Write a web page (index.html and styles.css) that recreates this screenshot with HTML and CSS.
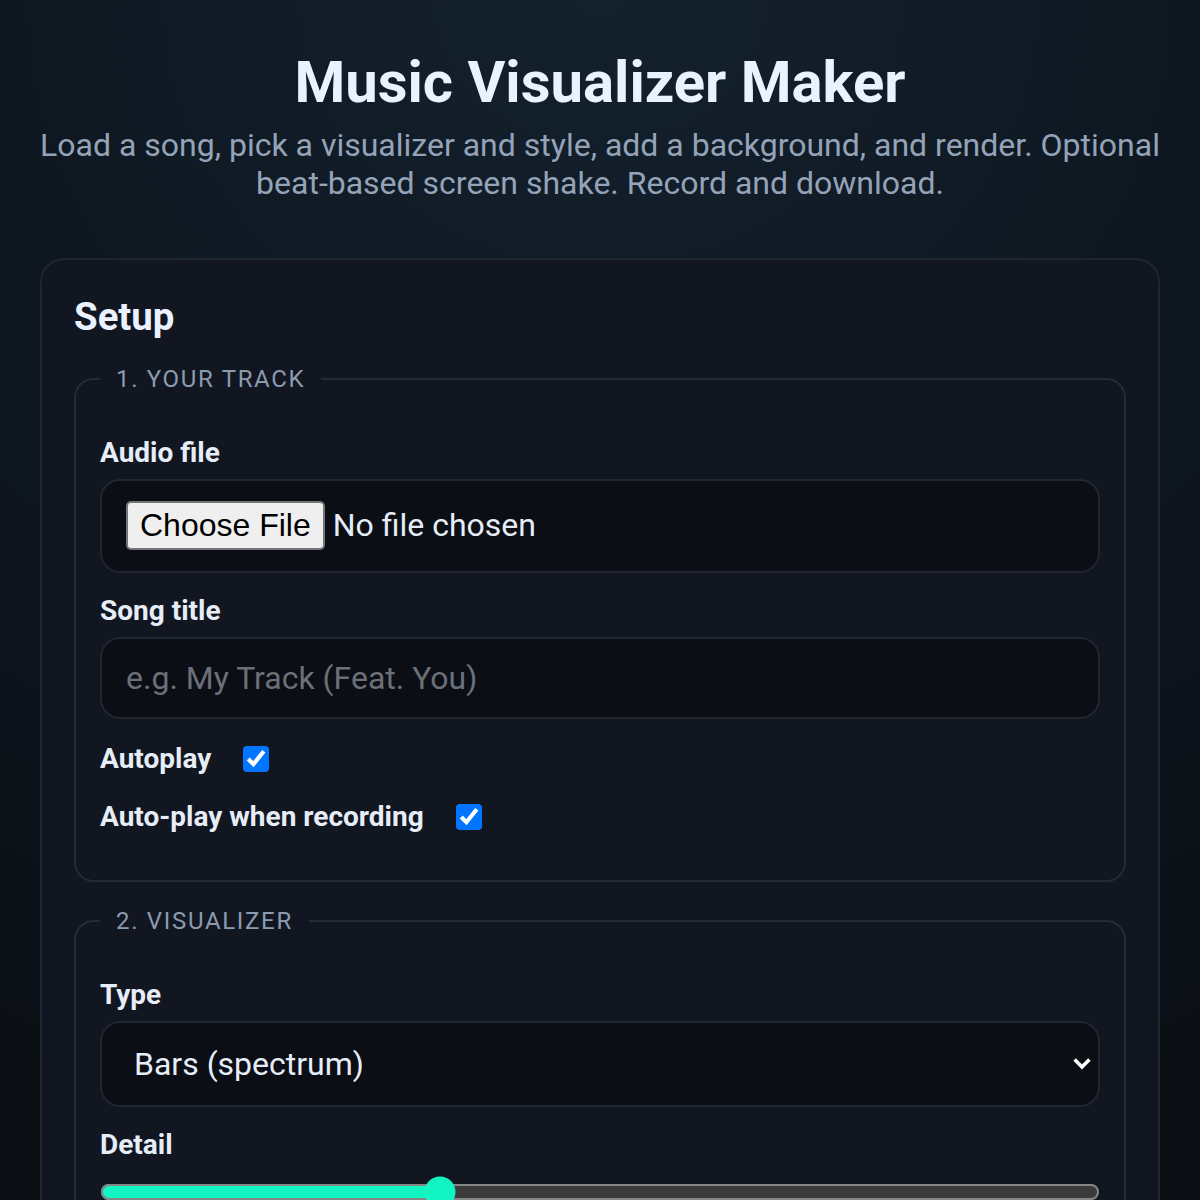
FILE: index.html
```html
<!DOCTYPE html>
<html lang="en">
<head>
<meta charset="utf-8">
<title>Music Visualizer Maker</title>
<link rel="stylesheet" href="styles.css">
</head>
<body>
<header class="hero">
  <h1 class="hero-title">Music Visualizer Maker</h1>
  <p class="hero-sub">Load a song, pick a visualizer and style, add a background, and render. Optional beat-based screen shake. Record and download.</p>
</header>
<main class="card">
  <h2 class="card-title">Setup</h2>
  <fieldset class="group">
    <legend class="group-legend">1. Your Track</legend>
    <div class="field">
      <label class="field-label" for="audio">Audio file</label>
      <input class="control file-control" id="audio" type="file" accept="audio/*">
    </div>
    <div class="field">
      <label class="field-label" for="title">Song title</label>
      <input class="control" id="title" type="text" placeholder="e.g. My Track (Feat. You)">
    </div>
    <div class="check-row">
      <label class="field-label" for="autoplay">Autoplay</label>
      <input class="check" id="autoplay" type="checkbox" checked>
    </div>
    <div class="check-row">
      <label class="field-label" for="recplay">Auto-play when recording</label>
      <input class="check" id="recplay" type="checkbox" checked>
    </div>
  </fieldset>
  <fieldset class="group">
    <legend class="group-legend">2. Visualizer</legend>
    <div class="field">
      <label class="field-label" for="type">Type</label>
      <div class="select-wrap">
        <select class="control select-control" id="type">
          <option>Bars (spectrum)</option>
          <option>Waveform</option>
          <option>Circle</option>
        </select>
        <svg class="select-arrow" viewBox="0 0 10 7" width="10" height="7" aria-hidden="true">
          <polyline points="1.3,1.3 5,5 8.7,1.3" fill="none" stroke="#ffffff" stroke-width="1.8" stroke-linejoin="miter"/>
        </svg>
      </div>
    </div>
    <div class="field">
      <label class="field-label" for="detail">Detail</label>
      <input class="range" id="detail" type="range" min="0" max="100" step="0.5" value="33.5">
    </div>
  </fieldset>
</main>
</body>
</html>
```
FILE: styles.css
```css
html {
  zoom: 2;
  min-height: 100%;
  background: radial-gradient(ellipse 120% 90% at 50% 0%, #13202d 0%, #0e1720 45%, #0a0e13 100%);
  background-color: #0a0d11;
}

body {
  margin: 0;
  padding: 24px 20px 40px;
  font-family: Roboto, "Liberation Sans", sans-serif;
  color: #e6edf7;
}

.hero {
  text-align: center;
  margin-bottom: 27.5px;
}

.hero-title {
  margin: 0 0 5px;
  font-size: 29px;
  font-weight: 700;
  color: #eaf2ff;
}

.hero-sub {
  margin: 0;
  font-size: 16px;
  line-height: 19.2px;
  color: #94a3b8;
}

.card {
  display: block;
  background: #111620;
  border: 1px solid #1f2632;
  border-radius: 12px;
  padding: 17px 16px;
}

.card-title {
  margin: 0 0 13px;
  font-size: 19.2px;
  font-weight: 700;
  color: #eaf2ff;
}

.group {
  margin: 0 0 12.5px;
  border: 1px solid #232b37;
  border-radius: 10px;
  padding: 21.5px 12px 12px;
  min-width: 0;
}

.group-legend {
  padding: 0 8px;
  font-size: 12px;
  letter-spacing: 0.07em;
  text-transform: uppercase;
  color: #8b9bb0;
}

.field {
  display: flex;
  flex-direction: column;
  gap: 5px;
  margin-bottom: 10.5px;
}

.field-label {
  font-size: 14px;
  font-weight: 700;
  color: #e6edf7;
}

.control {
  box-sizing: border-box;
  width: 100%;
  margin: 0;
  padding: 10px 12px;
  font-family: Roboto, "Liberation Sans", sans-serif;
  font-size: 16px;
  color: #e6edf7;
  background: #0b0e15;
  border: 1px solid #1f2630;
  border-radius: 10px;
  outline: none;
}

.control::placeholder {
  color: #6b7079;
}

.file-control {
  padding: 10.25px 12px;
}

.file-control::file-selector-button {
  padding: 1px 5px;
}

.select-wrap {
  position: relative;
}

.select-control {
  display: block;
  appearance: none;
  -webkit-appearance: none;
  padding: 11px 30px 11px 16px;
  line-height: 19px;
}

.select-arrow {
  position: absolute;
  right: 4px;
  top: 50%;
  margin-top: -3.5px;
  pointer-events: none;
}

.check-row {
  display: flex;
  align-items: center;
  gap: 12px;
  margin-bottom: 10px;
}

.check {
  margin: 3px 3px 3px 4px;
}

.range {
  width: 100%;
  margin: 2.5px 0 0;
  accent-color: #12f5c2;
  color-scheme: dark;
}
```
